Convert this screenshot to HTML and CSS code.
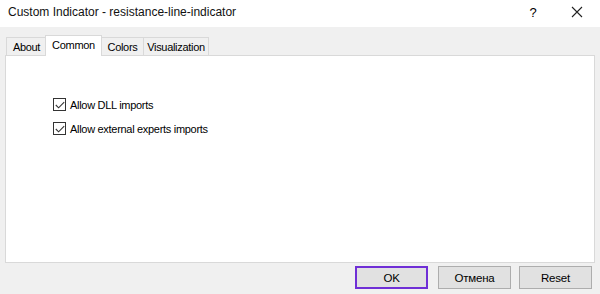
FILE: index.html
```html
<!DOCTYPE html>
<html>
<head>
<meta charset="utf-8">
<link rel="stylesheet" href="styles.css">
</head>
<body>
<div class="window">
  <div class="titlebar">
    <span class="title">Custom Indicator - resistance-line-indicator</span>
    <span class="help">?</span>
    <span class="close">
      <svg width="12" height="12" viewBox="0 0 12 12"><path d="M1 1 L11 11 M11 1 L1 11" stroke="#222" stroke-width="1.1" fill="none"/></svg>
    </span>
  </div>
  <div class="body">
    <div class="tabs">
      <div class="tab tab-about">About</div>
      <div class="tab tab-common active">Common</div>
      <div class="tab tab-colors">Colors</div>
      <div class="tab tab-vis">Visualization</div>
    </div>
    <div class="panel">
      <label class="check"><span class="box"><svg width="10" height="8" viewBox="0 0 10 8"><path d="M0.8 4 L3.6 6.8 L9.2 1.2" stroke="#333" stroke-width="1.1" fill="none"/></svg></span>Allow DLL imports</label>
      <label class="check"><span class="box"><svg width="10" height="8" viewBox="0 0 10 8"><path d="M0.8 4 L3.6 6.8 L9.2 1.2" stroke="#333" stroke-width="1.1" fill="none"/></svg></span>Allow external experts imports</label>
    </div>
    <div class="footer">
      <button class="btn default">OK</button>
      <button class="btn">Отмена</button>
      <button class="btn">Reset</button>
    </div>
  </div>
</div>
</body>
</html>
```
FILE: styles.css
```css
html, body {
  margin: 0;
  padding: 0;
}
body {
  width: 600px;
  height: 294px;
  background: #f0f0f0;
  font-family: "Liberation Sans", Arial, sans-serif;
  font-size: 11px;
  letter-spacing: -0.3px;
  color: #000;
  overflow: hidden;
}
.titlebar {
  height: 27px;
  background: #fff;
  display: flex;
  align-items: center;
  letter-spacing: 0;
}
.title {
  padding-left: 8px;
  font-size: 12px;
  flex: 1;
  padding-bottom: 3px;
  color: #111;
}
.help {
  width: 30px;
  text-align: center;
  font-size: 13px;
  margin-right: 14px;
  padding-bottom: 3px;
}
.close {
  width: 30px;
  display: flex;
  justify-content: center;
  margin-right: 8px;
  padding-bottom: 3px;
}
.body {
  padding: 7px 5px 0 5px;
}
.tabs {
  display: flex;
  align-items: flex-end;
  height: 21px;
  padding-left: 1px;
  position: relative;
  z-index: 1;
}
.tab {
  height: 18px;
  line-height: 18px;
  text-align: center;
  box-sizing: border-box;
  background: #f0f0f0;
  border: 1px solid #d9d9d9;
  border-bottom: none;
  margin-right: -1px;
  color: #000;
}
.tab-about { width: 41px; }
.tab-common { width: 57px; }
.tab-colors { width: 43px; }
.tab-vis { width: 66px; }
.tab.active {
  height: 21px;
  line-height: 19px;
  background: #fff;
  margin: 0 -1px -1px -1px;
  position: relative;
}
.panel {
  background: #fff;
  border: 1px solid #d9d9d9;
  height: 208px;
  padding: 42px 0 0 47px;
  box-sizing: border-box;
  width: 590px;
}
.check {
  display: flex;
  align-items: center;
  height: 13px;
  margin-bottom: 11px;
}
.box {
  width: 11px;
  height: 11px;
  border: 1px solid #333;
  display: flex;
  align-items: center;
  justify-content: center;
  margin-right: 4px;
  background: #fff;
}
.footer {
  display: flex;
  justify-content: flex-end;
  padding-right: 3px;
  padding-top: 3px;
  gap: 8px;
}
.btn {
  width: 73px;
  height: 23px;
  border: 1px solid #adadad;
  background: #e1e1e1;
  font-family: "Liberation Sans", Arial, sans-serif;
  font-size: 11.5px;
  letter-spacing: -0.2px;
  color: #000;
  padding: 0;
}
.btn.default {
  border: 2px solid #6f2fd6;
  margin-right: 2px;
}
```
